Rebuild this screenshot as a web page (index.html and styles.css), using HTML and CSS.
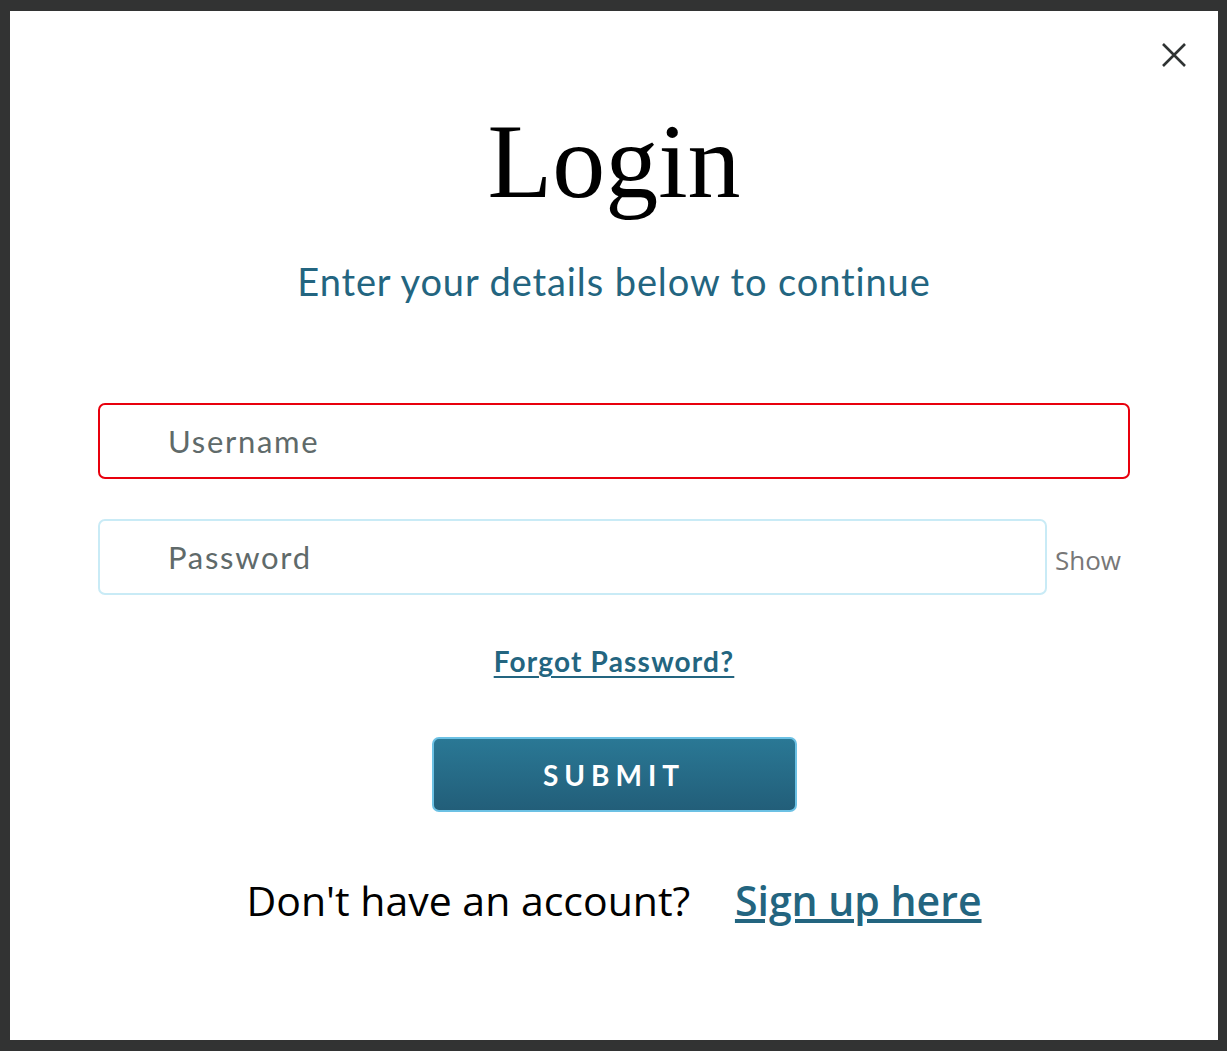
FILE: index.html
```html
<!DOCTYPE html>
<html lang="en">
<head>
<meta charset="utf-8">
<title>Login</title>
<link rel="stylesheet" href="styles.css">
</head>
<body>
<div class="modal">
  <button class="close" aria-label="Close">
    <svg width="28" height="28" viewBox="0 0 28 28"><path d="M3 3 L25 25 M25 3 L3 25" stroke="#2f3333" stroke-width="2.6" stroke-linecap="butt" fill="none"/></svg>
  </button>
  <h1 class="title">Login</h1>
  <p class="subtitle">Enter your details below to continue</p>
  <form class="form">
    <div class="field-row">
      <input class="input input-error" type="text" placeholder="Username">
    </div>
    <div class="field-row">
      <input class="input input-pass" type="password" placeholder="Password">
      <span class="show">Show</span>
    </div>
    <a class="forgot" href="#">Forgot Password?</a>
    <button class="submit" type="button">SUBMIT</button>
    <p class="signup">Don't have an account? <a href="#">Sign up here</a></p>
  </form>
</div>
</body>
</html>
```

FILE: styles.css
```css
* { box-sizing: border-box; }
html, body { margin: 0; padding: 0; }
body {
  background: #323333;
  width: 1227px;
  height: 1051px;
  overflow: hidden;
}
.modal {
  position: relative;
  margin: 11px 0 0 10px;
  width: 1208px;
  height: 1029px;
  background: #fff;
  display: flex;
  flex-direction: column;
  align-items: center;
}
.close {
  position: absolute;
  top: 30px;
  right: 30px;
  width: 28px;
  height: 28px;
  padding: 0;
  border: 0;
  background: none;
}
.close svg { display: block; }
.title {
  margin: 98px 0 0;
  font-family: "Liberation Serif", "Times New Roman", serif;
  font-weight: normal;
  font-size: 106px;
  line-height: 1;
  color: #000;
}
.subtitle {
  margin: 43px 0 0;
  font-family: Lato, "Open Sans", sans-serif;
  font-size: 38px;
  line-height: 46px;
  letter-spacing: 0.9px;
  color: #236580;
}
.form {
  width: 100%;
  padding: 0 88px;
  margin-top: 99px;
  display: flex;
  flex-direction: column;
  align-items: center;
}
.field-row {
  width: 100%;
  display: flex;
  align-items: center;
  margin-bottom: 40px;
}
.input {
  height: 76px;
  border-radius: 7px;
  padding: 0 0 0 68px;
  font-family: Lato, "Open Sans", sans-serif;
  font-size: 31px;
  letter-spacing: 1.7px;
  color: #333;
  outline: none;
  background: #fff;
}
.input::placeholder { color: #5f6a6a; }
.input-error {
  width: 100%;
  border: 2px solid #e8000d;
}
.input-pass {
  width: 949px;
  border: 2px solid #c9ebf6;
}
.show {
  margin-left: 8px;
  padding-top: 5px;
  font-family: "Open Sans", sans-serif;
  font-size: 26px;
  color: #777;
}
.forgot {
  margin-top: 6px;
  font-family: Lato, "Open Sans", sans-serif;
  font-weight: bold;
  font-size: 28px;
  line-height: 40px;
  letter-spacing: 1.2px;
  color: #236580;
  text-decoration: underline;
  text-underline-offset: 4px;
}
.submit {
  margin-top: 56px;
  width: 365px;
  height: 75px;
  border: 2px solid #6cc1e4;
  border-radius: 7px;
  background: linear-gradient(#2a7895, #225e79);
  color: #fff;
  font-family: Lato, "Open Sans", sans-serif;
  font-weight: bold;
  font-size: 28px;
  letter-spacing: 6px;
  padding-left: 6px;
}
.signup {
  margin: 60px 0 0;
  font-family: "Open Sans", sans-serif;
  font-size: 41px;
  line-height: 56px;
  color: #000;
}
.signup a {
  margin-left: 34px;
  color: #236580;
  font-weight: 600;
  text-decoration: underline;
}
```
